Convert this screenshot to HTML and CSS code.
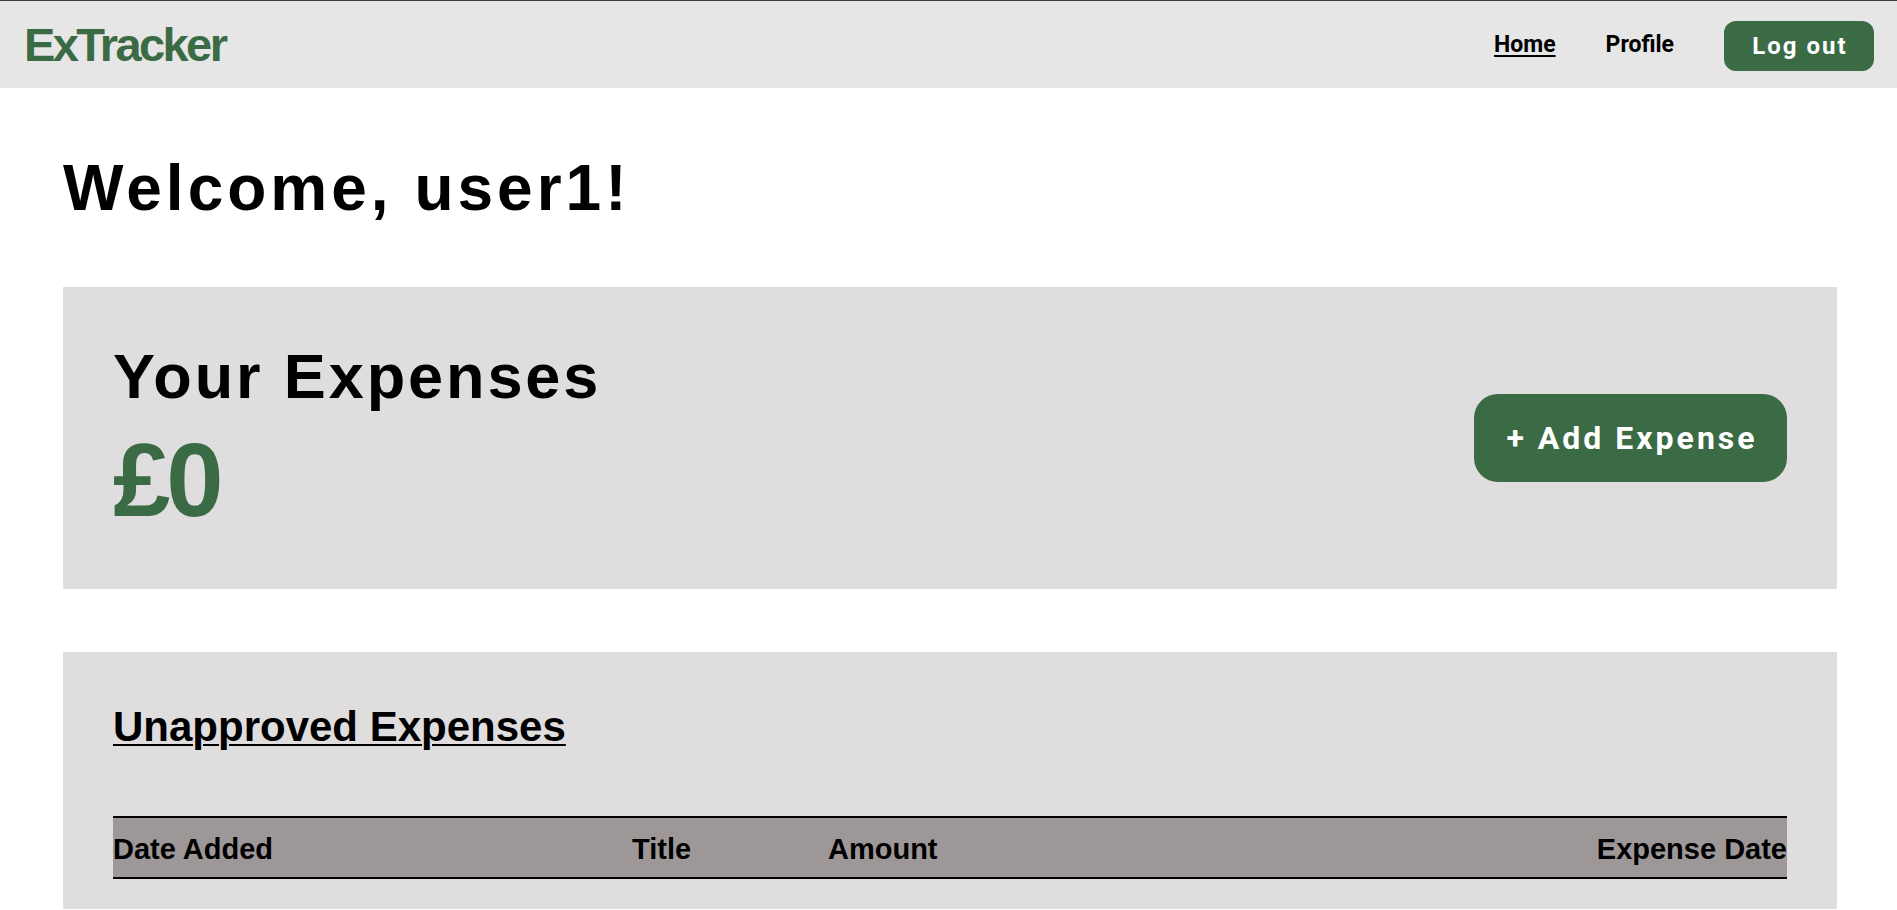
FILE: index.html
```html
<!DOCTYPE html>
<html lang="en">
<head>
<meta charset="utf-8">
<title>ExTracker</title>
<link rel="stylesheet" href="styles.css">
</head>
<body>
<nav class="topbar">
  <a class="logo" href="#">ExTracker</a>
  <div class="nav-links">
    <a class="nav-link active" href="#">Home</a>
    <a class="nav-link" href="#">Profile</a>
    <button class="logout">Log out</button>
  </div>
</nav>
<main class="content">
  <h1 class="welcome">Welcome, user1!</h1>
  <section class="card summary">
    <div class="summary-text">
      <h2 class="summary-title">Your Expenses</h2>
      <p class="summary-amount">£0</p>
    </div>
    <button class="add-btn">+ Add Expense</button>
  </section>
  <section class="card list">
    <h3 class="list-title">Unapproved Expenses</h3>
    <table class="expense-table">
      <thead>
        <tr>
          <th class="col-date">Date Added</th>
          <th class="col-title">Title</th>
          <th class="col-amount">Amount</th>
          <th class="col-exp">Expense Date</th>
        </tr>
      </thead>
    </table>
  </section>
</main>
</body>
</html>
```
FILE: styles.css
```css
* { box-sizing: border-box; }
html, body { margin: 0; padding: 0; }
body {
  font-family: "Liberation Sans", Arial, sans-serif;
  color: #000;
  background: #fff;
}

.topbar {
  height: 88px;
  border-top: 1px solid #3a3a3a;
  background: #e6e6e6;
  display: flex;
  align-items: center;
  justify-content: space-between;
  padding: 0 23px 0 24px;
}
.logo {
  font-family: "Liberation Sans", Arial, sans-serif;
  font-weight: 700;
  font-size: 47px;
  letter-spacing: -2.6px;
  color: #3b6b45;
  text-decoration: none;
}
.nav-links {
  display: flex;
  align-items: center;
  gap: 50px;
}
.nav-link {
  font-family: Roboto, "Liberation Sans", sans-serif;
  font-weight: 700;
  font-size: 23px;
  color: #000;
  text-decoration: none;
}
.nav-link.active { text-decoration: underline; text-underline-offset: 3px; }
.logout {
  font-family: Roboto, "Liberation Sans", sans-serif;
  font-weight: 700;
  font-size: 24px;
  letter-spacing: 2px;
  color: #fff;
  background: #3b6b45;
  border: none;
  border-radius: 12px;
  width: 150px;
  height: 50px;
  padding: 0 0 0 2px;
  margin-top: 2px;
}

.content {
  padding: 0 60px 0 63px;
}
.welcome {
  margin: 63px 0 62px;
  font-size: 64px;
  line-height: 74px;
  font-weight: 700;
  letter-spacing: 4px;
}
.card {
  background: #dfddde;
}
.summary {
  display: flex;
  align-items: center;
  justify-content: space-between;
  padding: 58px 50px;
  height: 302px;
}
.summary-title {
  margin: 0;
  font-size: 63px;
  line-height: 60px;
  font-weight: 700;
  letter-spacing: 2.9px;
}
.summary-amount {
  margin: 25px 0 0;
  font-family: "Liberation Sans", Arial, sans-serif;
  font-size: 103px;
  line-height: 100px;
  font-weight: 700;
  letter-spacing: -4px;
  color: #3b6b45;
}
.add-btn {
  font-family: Roboto, "Liberation Sans", sans-serif;
  font-weight: 700;
  font-size: 32px;
  letter-spacing: 3px;
  color: #fff;
  background: #3b6b45;
  border: none;
  border-radius: 24px;
  width: 313px;
  height: 88px;
  padding: 0 0 0 3px;
}

.list {
  margin-top: 63px;
  padding: 51px 50px 30px;
}
.list-title {
  margin: 0 0 65px;
  font-size: 42px;
  line-height: 48px;
  font-weight: 700;
  text-decoration: underline;
  text-decoration-thickness: 2px;
  text-underline-offset: 3px;
}
.expense-table {
  width: 100%;
  border-collapse: collapse;
  table-layout: fixed;
}
.expense-table th {
  background: #9d9797;
  border-top: 2px solid #000;
  border-bottom: 2px solid #000;
  padding: 14px 0 11px;
  font-size: 29px;
  line-height: 34px;
  font-weight: 700;
  text-align: left;
}
.col-date { width: 519px; }
.col-title { width: 196px; }
.col-amount { width: 352px; }
.expense-table th.col-exp { text-align: right; }
```
